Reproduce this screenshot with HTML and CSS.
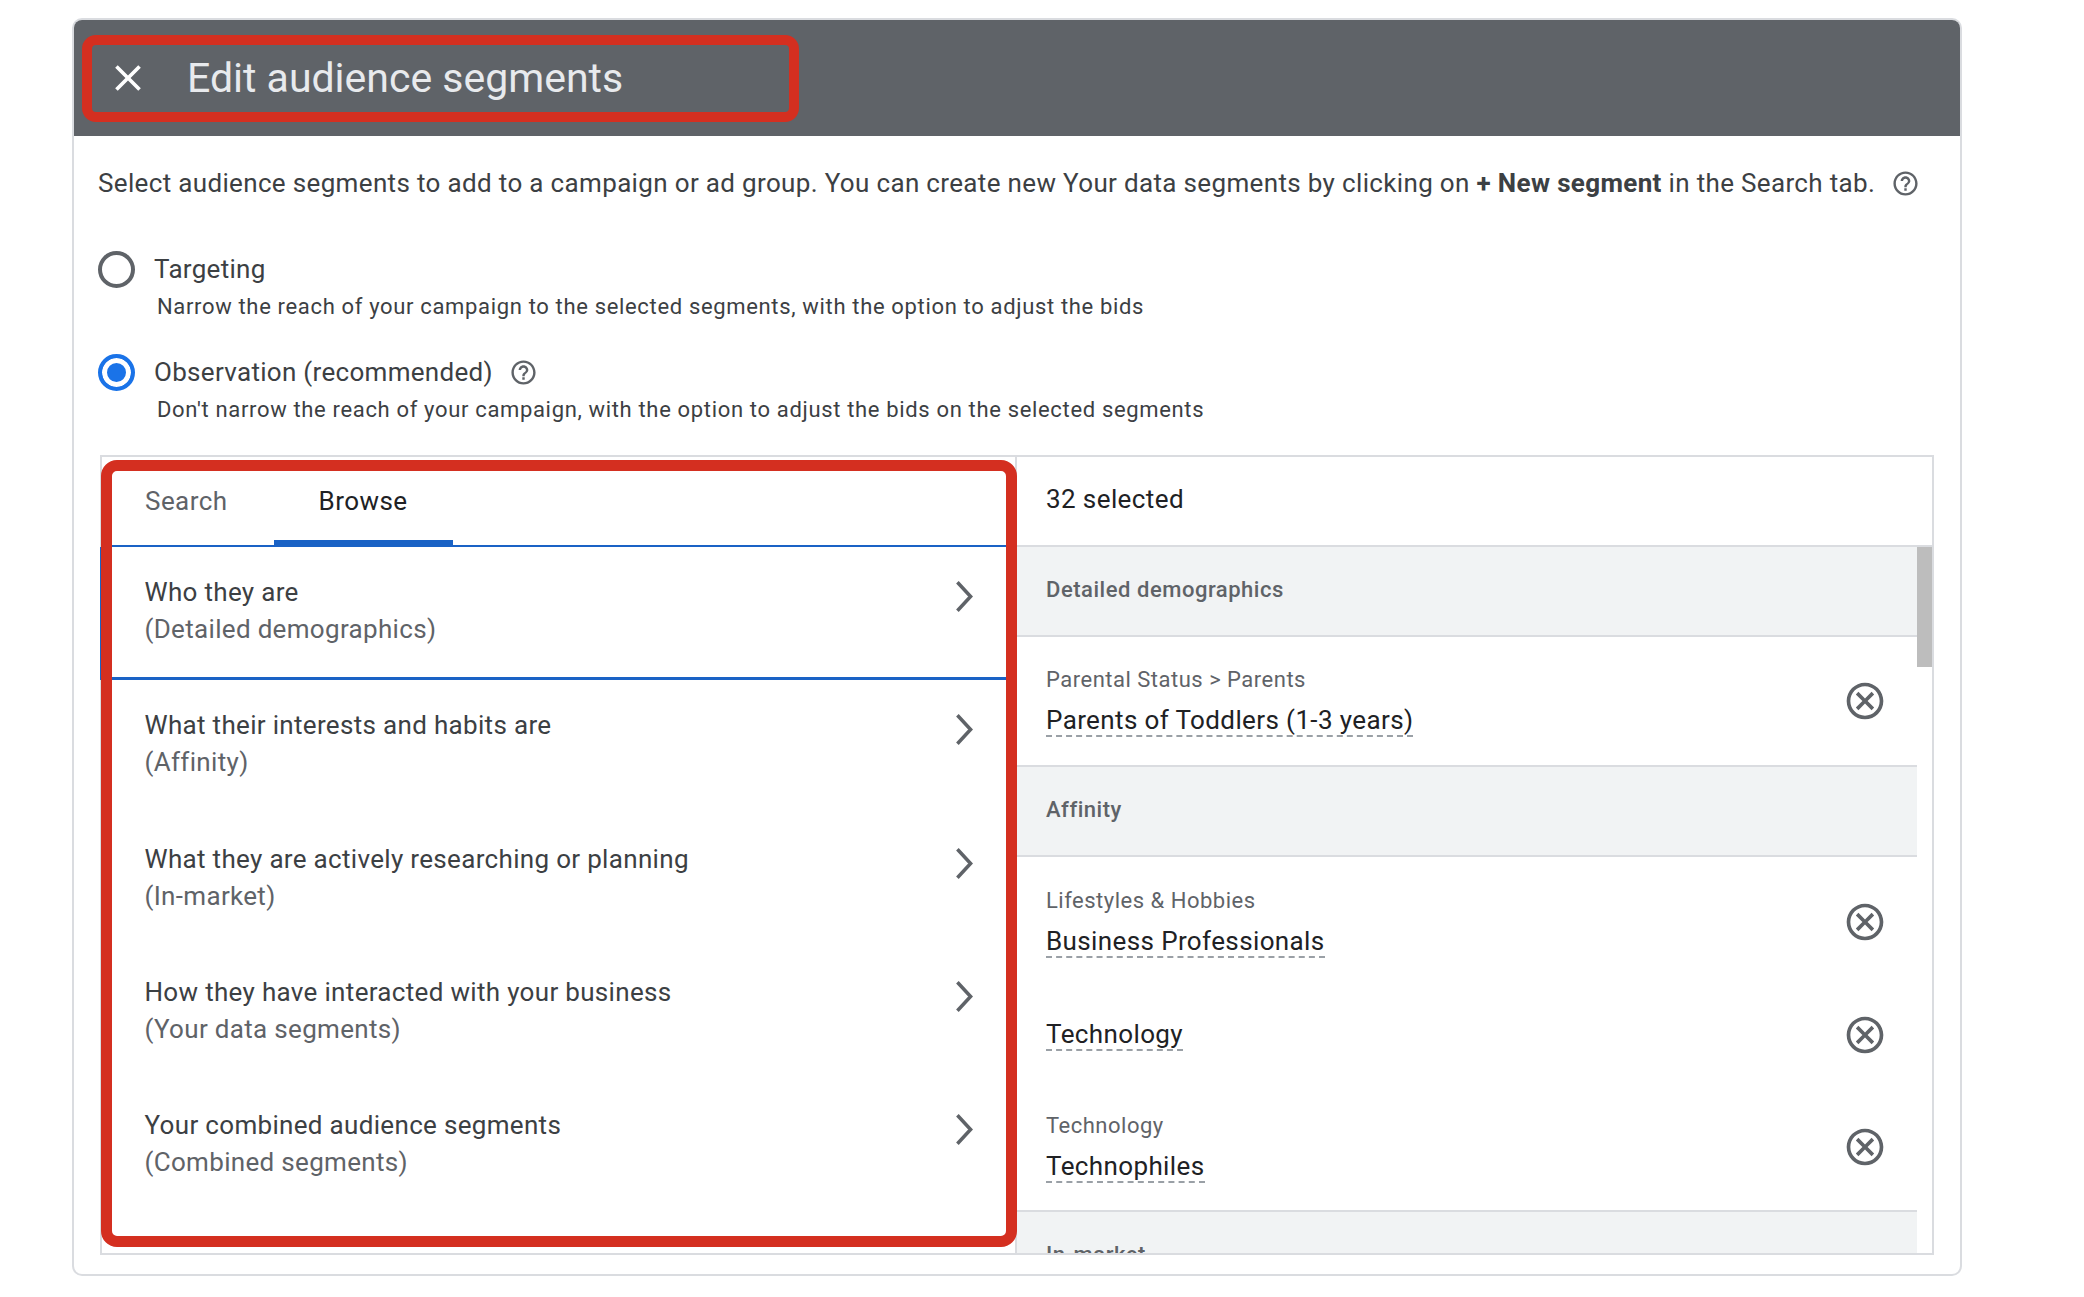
FILE: index.html
```html
<!DOCTYPE HTML>
<html>

<head>
    <meta charset="UTF-8">
    <title>Edit audience segments</title>
    <link rel="stylesheet" href="styles.css">
</head>

<body>
    <svg class="sprite">
        <symbol id="icon-help" viewBox="0 0 24 24"><path d="M11 18h2v-2h-2v2zm1-16C6.48 2 2 6.48 2 12s4.48 10 10 10 10-4.48 10-10S17.52 2 12 2zm0 18c-4.41 0-8-3.59-8-8s3.59-8 8-8 8 3.59 8 8-3.59 8-8 8zm0-14c-2.21 0-4 1.79-4 4h2c0-1.1.9-2 2-2s2 .9 2 2c0 2-3 1.75-3 5h2c0-2.25 3-2.5 3-5 0-2.21-1.79-4-4-4z"/></symbol>
        <symbol id="icon-remove" viewBox="0 0 24 24"><path d="M12 2C6.47 2 2 6.47 2 12s4.47 10 10 10 10-4.47 10-10S17.53 2 12 2zm0 18c-4.41 0-8-3.59-8-8s3.59-8 8-8 8 3.59 8 8-3.59 8-8 8zm3.59-13L12 10.59 8.41 7 7 8.41 10.59 12 7 15.59 8.41 17 12 13.41 15.59 17 17 15.59 13.41 12 17 8.41z"/></symbol>
        <symbol id="icon-chevron" viewBox="0 0 18 30"><polyline points="3,2 15,15 3,28" fill="none" stroke="currentColor" stroke-width="3.2"/></symbol>
    </svg>

    <div class="card">
        <div class="card__header">
            <div class="title-box">
                <svg class="close-icon" viewBox="0 0 24 24"><path d="M19 6.41L17.59 5 12 10.59 6.41 5 5 6.41 10.59 12 5 17.59 6.41 19 12 13.41 17.59 19 19 17.59 13.41 12z"/></svg>
                <h1>Edit audience segments</h1>
            </div>
        </div>

        <div class="card__body">
            <div class="intro">
                <span>Select audience segments to add to a campaign or ad group. You can create new Your data segments by clicking on <b>+ New segment</b> in the Search tab.</span>
                <svg class="help-icon"><use href="#icon-help"/></svg>
            </div>

            <div class="option">
                <div class="option__row">
                    <span class="radio"></span>
                    <label>Targeting</label>
                </div>
                <p class="option__desc">Narrow the reach of your campaign to the selected segments, with the option to adjust the bids</p>
            </div>

            <div class="option">
                <div class="option__row">
                    <span class="radio radio--on"></span>
                    <label>Observation (recommended)</label>
                    <svg class="help-icon"><use href="#icon-help"/></svg>
                </div>
                <p class="option__desc">Don't narrow the reach of your campaign, with the option to adjust the bids on the selected segments</p>
            </div>

            <div class="panel">
                <div class="browse">
                    <div class="tabs">
                        <span class="tab">Search</span>
                        <span class="tab tab--active">Browse</span>
                    </div>
                    <div class="browse__item browse__item--first">
                        <div>
                            <div class="browse__title">Who they are</div>
                            <div class="browse__sub">(Detailed demographics)</div>
                        </div>
                        <svg class="chevron"><use href="#icon-chevron"/></svg>
                    </div>
                    <div class="browse__item">
                        <div>
                            <div class="browse__title">What their interests and habits are</div>
                            <div class="browse__sub">(Affinity)</div>
                        </div>
                        <svg class="chevron"><use href="#icon-chevron"/></svg>
                    </div>
                    <div class="browse__item">
                        <div>
                            <div class="browse__title">What they are actively researching or planning</div>
                            <div class="browse__sub">(In-market)</div>
                        </div>
                        <svg class="chevron"><use href="#icon-chevron"/></svg>
                    </div>
                    <div class="browse__item">
                        <div>
                            <div class="browse__title">How they have interacted with your business</div>
                            <div class="browse__sub">(Your data segments)</div>
                        </div>
                        <svg class="chevron"><use href="#icon-chevron"/></svg>
                    </div>
                    <div class="browse__item">
                        <div>
                            <div class="browse__title">Your combined audience segments</div>
                            <div class="browse__sub">(Combined segments)</div>
                        </div>
                        <svg class="chevron"><use href="#icon-chevron"/></svg>
                    </div>
                    <div class="browse__box"></div>
                </div>

                <div class="selected">
                    <div class="selected__count">32 selected</div>
                    <div class="selected__scroll">
                        <div class="selected__list">
                            <div class="group">Detailed demographics</div>
                            <div class="segment segment--last segment--tall">
                                <div>
                                    <div class="segment__path">Parental Status &gt; Parents</div>
                                    <span class="segment__name">Parents of Toddlers (1-3 years)</span>
                                </div>
                                <svg class="remove-icon"><use href="#icon-remove"/></svg>
                            </div>
                            <div class="group">Affinity</div>
                            <div class="segment">
                                <div>
                                    <div class="segment__path">Lifestyles &amp; Hobbies</div>
                                    <span class="segment__name">Business Professionals</span>
                                </div>
                                <svg class="remove-icon"><use href="#icon-remove"/></svg>
                            </div>
                            <div class="segment segment--single">
                                <div>
                                    <span class="segment__name">Technology</span>
                                </div>
                                <svg class="remove-icon"><use href="#icon-remove"/></svg>
                            </div>
                            <div class="segment segment--last">
                                <div>
                                    <div class="segment__path">Technology</div>
                                    <span class="segment__name">Technophiles</span>
                                </div>
                                <svg class="remove-icon"><use href="#icon-remove"/></svg>
                            </div>
                            <div class="group">In-market</div>
                        </div>
                        <div class="scrollbar">
                            <div class="scrollbar__thumb"></div>
                        </div>
                    </div>
                </div>
            </div>
        </div>
    </div>
</body>

</html>
```

FILE: styles.css
```css
body {
    margin: 0;
    background: #ffffff;
    font-family: Roboto, "Liberation Sans", sans-serif;
    color: #3c4043;
}

.sprite {
    display: none;
}

.card {
    width: 1890px;
    height: 1258px;
    margin: 18px 0 0 72px;
    border: 2px solid #dadce0;
    border-radius: 10px;
    box-sizing: border-box;
    overflow: hidden;
}

.card__header {
    height: 116px;
    padding: 15px 0 0 8px;
    box-sizing: border-box;
    background: #5f6368;
}

.title-box {
    width: 717px;
    height: 87px;
    padding-bottom: 2px;
    border: 10px solid #d42f20;
    border-radius: 14px;
    box-sizing: border-box;
    display: flex;
    align-items: center;
}

.close-icon {
    width: 44px;
    height: 44px;
    margin-left: 14px;
    fill: #ffffff;
}

.title-box h1 {
    margin: 0 0 0 37px;
    font-size: 41px;
    font-weight: 400;
    color: #e8eaed;
}

.card__body {
    padding: 29px 0 0 24px;
}

.intro {
    display: flex;
    align-items: center;
    font-size: 26px;
    line-height: 36px;
    letter-spacing: 0.34px;
    white-space: nowrap;
}

.intro .help-icon {
    margin-left: 16px;
}

.help-icon {
    flex: none;
    width: 29px;
    height: 29px;
    fill: #5f6368;
}

.option {
    margin-top: 48px;
}

.option + .option {
    margin-top: 29px;
}

.option__row {
    display: flex;
    align-items: center;
    height: 40px;
}

.option__row label {
    font-size: 26px;
    letter-spacing: 0.3px;
    margin-left: 19px;
}

.option__row .help-icon {
    margin-left: 16px;
}

.radio {
    width: 37px;
    height: 37px;
    border: 4px solid #5f6368;
    border-radius: 50%;
    box-sizing: border-box;
}

.radio--on {
    border-color: #1a73e8;
    background: #1a73e8;
    box-shadow: inset 0 0 0 5px #ffffff;
}

.option__desc {
    margin: 2px 0 0 59px;
    font-size: 22px;
    line-height: 32px;
    letter-spacing: 0.66px;
}

.panel {
    display: grid;
    grid-template-columns: 915px 1fr;
    width: 1834px;
    height: 800px;
    margin: 29px 0 0 2px;
    border: 2px solid #dadce0;
    box-sizing: border-box;
}

.browse {
    position: relative;
    border-right: 2px solid #dadce0;
}

.tabs {
    display: flex;
    height: 90px;
    padding-left: 43px;
    border-bottom: 2px solid #1a62c5;
    box-sizing: border-box;
}

.tab {
    font-size: 26px;
    line-height: 88px;
    margin-right: 46px;
    letter-spacing: 0.45px;
    color: #5f6368;
}

.tab--active {
    height: 88px;
    margin-right: 0;
    padding: 0 45px;
    color: #202124;
    border-bottom: 5px solid #1a62c5;
    box-sizing: border-box;
}

.browse__item {
    display: flex;
    justify-content: space-between;
    height: 133.33px;
    padding: 27px 41px 0 42.5px;
    box-sizing: border-box;
}

.browse__item--first {
    margin-left: -2px;
    border-left: 2px solid #1a62c5;
    border-bottom: 3px solid #1a62c5;
}

.browse__title {
    font-size: 26px;
    line-height: 37px;
    letter-spacing: 0.32px;
}

.browse__sub {
    font-size: 26px;
    line-height: 37px;
    letter-spacing: 0.32px;
    color: #5f6368;
}

.chevron {
    flex: none;
    width: 20px;
    height: 33px;
    margin-top: 6px;
    color: #5f6368;
}

.browse__box {
    position: absolute;
    left: -1px;
    top: 3px;
    width: 916px;
    height: 787px;
    border: 11px solid #d42f20;
    border-radius: 16px;
    box-sizing: border-box;
}

.selected {
    display: flex;
    flex-direction: column;
    min-height: 0;
}

.selected__count {
    flex: none;
    height: 88px;
    padding-left: 29px;
    font-size: 26px;
    line-height: 84px;
    letter-spacing: 0.4px;
    color: #202124;
    border-bottom: 2px solid #dadce0;
}

.selected__scroll {
    display: flex;
    flex: 1;
    min-height: 0;
    overflow: hidden;
}

.selected__list {
    flex: 1;
}

.scrollbar {
    flex: none;
    width: 15px;
}

.scrollbar__thumb {
    height: 120px;
    background: #bdbdbd;
}

.group {
    height: 90px;
    padding-left: 29px;
    font-size: 22px;
    font-weight: 500;
    line-height: 85px;
    letter-spacing: 0.53px;
    color: #5f6368;
    background: #f1f3f4;
    border-bottom: 2px solid #dadce0;
    box-sizing: border-box;
}

.segment {
    display: flex;
    align-items: center;
    justify-content: space-between;
    height: 129px;
    padding: 0 30px 0 29px;
    box-sizing: border-box;
}

.segment--single {
    height: 98px;
}

.segment--last {
    height: 128px;
    border-bottom: 2px solid #dadce0;
}

.segment--tall {
    height: 130px;
}

.segment__path {
    font-size: 22px;
    line-height: 30px;
    margin-bottom: 10px;
    letter-spacing: 0.5px;
    color: #5f6368;
}

.segment__name {
    display: inline-block;
    font-size: 26px;
    line-height: 30px;
    letter-spacing: 0.38px;
    color: #202124;
    border-bottom: 2px dashed #9aa0a6;
}

.remove-icon {
    flex: none;
    width: 44px;
    height: 44px;
    fill: #5f6368;
}
```
